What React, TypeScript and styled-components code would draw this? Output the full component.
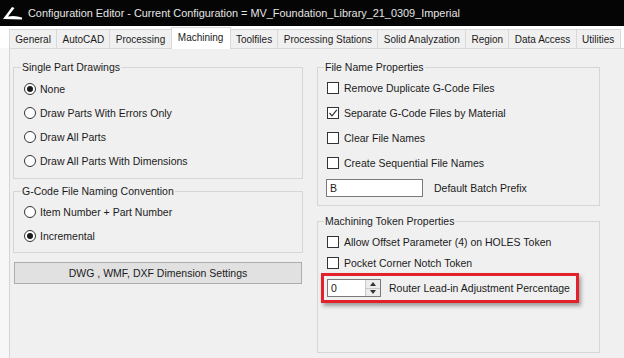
import React from 'react';
import styled, { createGlobalStyle } from 'styled-components';

const GlobalStyle = createGlobalStyle`
  html, body {
    margin: 0;
    padding: 0;
    background: #ffffff;
    font-family: "Liberation Sans", Arial, sans-serif;
    color: #1b1b1b;
  }
  * { box-sizing: border-box; }
`;

const Window = styled.div`
  width: 624px;
  height: 358px;
  display: flex;
  flex-direction: column;
  overflow: hidden;
  background: #f7f7f7;
`;

const TitleBar = styled.div`
  height: 26px;
  flex: none;
  background: #050505;
  display: flex;
  align-items: center;
  gap: 5px;
  padding-left: 3px;
  color: #e4e4e4;
  font-size: 10.9px;
  white-space: nowrap;
`;

const TabStrip = styled.div`
  height: 22px;
  flex: none;
  display: flex;
  align-items: flex-end;
  padding-left: 9px;
  background: #ffffff;
`;

const Tab = styled.div<{ $active?: boolean }>`
  height: ${p => (p.$active ? '22px' : '19px')};
  margin-bottom: ${p => (p.$active ? '-1px' : '0')};
  margin-right: -1px;
  padding: 0 ${p => (p.$active ? '6.3px' : '5.3px')};
  display: flex;
  align-items: center;
  padding-bottom: ${p => (p.$active ? '3px' : '0')};
  border: 1px solid #d9d9d9;
  border-bottom: none;
  background: ${p => (p.$active ? '#ffffff' : '#f0f0f0')};
  font-size: 10px;
  white-space: nowrap;
  position: relative;
  z-index: ${p => (p.$active ? 1 : 0)};
`;

const TabPage = styled.div`
  flex: 1;
  margin-left: 9px;
  border-left: 1px solid #d4d4d4;
  border-top: 1px solid #d9d9d9;
  background: #f0f0f0;
  display: grid;
  grid-template-columns: 290px 283px;
  column-gap: 14px;
  padding: 12px 0 0 3px;
  align-items: start;
`;

const Column = styled.div`
  display: flex;
  flex-direction: column;
`;

const Group = styled.fieldset<{ $gap?: number; $inset?: number; $top?: number }>`
  margin: 0 0 ${p => p.$gap ?? 0}px 0;
  padding: ${p => p.$top ?? 1}px 8px 5px ${p => p.$inset ?? 10}px;
  border: 1px solid #d6d6d6;
  min-inline-size: 0;
  display: flex;
  flex-direction: column;
`;

const Legend = styled.legend`
  font-size: 10.5px;
  line-height: 13px;
  padding: 0 1px;
  margin-left: -3px;
  color: #1b1b1b;
`;

const Row = styled.div<{ $h?: number }>`
  height: ${p => p.$h ?? 24}px;
  display: flex;
  align-items: center;
  font-size: 10.5px;
  white-space: nowrap;
`;

const Radio = styled.span<{ $on?: boolean }>`
  width: 12px;
  height: 12px;
  flex: none;
  border-radius: 50%;
  border: 1px solid #333333;
  background: #ffffff;
  margin-right: 4px;
  display: flex;
  align-items: center;
  justify-content: center;
  &::after {
    content: '';
    width: 6px;
    height: 6px;
    border-radius: 50%;
    background: ${p => (p.$on ? '#1a1a1a' : 'transparent')};
  }
`;

const Box = styled.span`
  width: 12px;
  height: 12px;
  flex: none;
  border: 1px solid #333333;
  background: #ffffff;
  margin-right: 5px;
  display: flex;
  align-items: center;
  justify-content: center;
`;

const Button = styled.div`
  margin-top: 9px;
  height: 22px;
  width: 288px;
  margin-left: 1px;
  background: #e1e1e1;
  border: 1px solid #adadad;
  display: flex;
  align-items: center;
  justify-content: center;
  font-size: 10.5px;
`;

const TextBox = styled.div<{ $w: number }>`
  width: ${p => p.$w}px;
  height: 18px;
  border: 1px solid #7a7a7a;
  background: #ffffff;
  padding-left: 3px;
  display: flex;
  align-items: center;
  font-size: 10.5px;
  margin-left: -1px;
`;

const FieldLabel = styled.span<{ $gap: number }>`
  margin-left: ${p => p.$gap}px;
`;

const Highlight = styled.div`
  height: 30px;
  margin-left: -6px;
  width: 258px;
  border: 3px solid #e2212a;
  box-shadow: 2px 3px 4px rgba(0, 0, 0, 0.35);
  display: flex;
  align-items: center;
  padding-left: 3px;
  font-size: 10.5px;
  white-space: nowrap;
`;

const Spinner = styled.div`
  width: 54px;
  height: 18px;
  border: 1px solid #7a7a7a;
  background: #ffffff;
  display: flex;
  font-size: 10.5px;
`;

const SpinValue = styled.div`
  flex: 1;
  padding-left: 3px;
  display: flex;
  align-items: center;
`;

const SpinArrows = styled.div`
  width: 15px;
  display: flex;
  flex-direction: column;
  border-left: 1px solid #c8c8c8;
`;

const SpinButton = styled.div<{ $up?: boolean }>`
  flex: 1;
  background: #ececec;
  border-bottom: ${p => (p.$up ? '1px solid #c8c8c8' : 'none')};
  display: flex;
  align-items: center;
  justify-content: center;
  &::after {
    content: '';
    border-left: 3px solid transparent;
    border-right: 3px solid transparent;
    ${p => (p.$up ? 'border-bottom: 4px solid #333;' : 'border-top: 4px solid #333;')}
  }
`;

const tabs = [
  'General', 'AutoCAD', 'Processing', 'Machining', 'Toolfiles',
  'Processing Stations', 'Solid Analyzation', 'Region', 'Data Access', 'Utilities'
];

function Logo () {
  return (
    <svg width="20" height="16" viewBox="0 0 20 16">
      <path d="M0 14 L9 2 L11.5 3 L5 11.5 Q12 10 19 12.5 L19 14.5 Z" fill="#ffffff" />
    </svg>
  );
}

function Check ({ on }: { on?: boolean }) {
  return (
    <Box>
      {on && (
        <svg width="10" height="10" viewBox="0 0 10 10">
          <path d="M1.5 5 L4 7.8 L8.8 1.8" stroke="#333" strokeWidth="1.2" fill="none" />
        </svg>
      )}
    </Box>
  );
}

export default function App () {
  return (
    <Window>
      <GlobalStyle />
      <TitleBar>
        <Logo />
        Configuration Editor - Current Configuration = MV_Foundation_Library_21_0309_Imperial
      </TitleBar>
      <TabStrip>
        {tabs.map(t => <Tab key={t} $active={t === 'Machining'}>{t}</Tab>)}
      </TabStrip>
      <TabPage>
        <Column>
          <Group $gap={6} $top={3}>
            <Legend>Single Part Drawings</Legend>
            <Row><Radio $on />None</Row>
            <Row><Radio />Draw Parts With Errors Only</Row>
            <Row><Radio />Draw All Parts</Row>
            <Row><Radio />Draw All Parts With Dimensions</Row>
          </Group>
          <Group $top={2} style={{ paddingBottom: 4 }}>
            <Legend>G-Code File Naming Convention</Legend>
            <Row><Radio />Item Number + Part Number</Row>
            <Row><Radio $on />Incremental</Row>
          </Group>
          <Button>DWG , WMF, DXF Dimension Settings</Button>
        </Column>
        <Column>
          <Group $gap={9} $inset={9}>
            <Legend>File Name Properties</Legend>
            <Row $h={25}><Check />Remove Duplicate G-Code Files</Row>
            <Row $h={25}><Check on />Separate G-Code Files by Material</Row>
            <Row $h={25}><Check />Clear File Names</Row>
            <Row $h={25}><Check />Create Sequential File Names</Row>
            <Row $h={25}>
              <TextBox $w={97}>B</TextBox>
              <FieldLabel $gap={11}>Default Batch Prefix</FieldLabel>
            </Row>
          </Group>
          <Group $inset={9} $top={2} style={{ height: 138 }}>
            <Legend>Machining Token Properties</Legend>
            <Row $h={23}><Check />Allow Offset Parameter (4) on HOLES Token</Row>
            <Row $h={20}><Check />Pocket Corner Notch Token</Row>
            <Highlight>
              <Spinner>
                <SpinValue>0</SpinValue>
                <SpinArrows>
                  <SpinButton $up />
                  <SpinButton />
                </SpinArrows>
              </Spinner>
              <FieldLabel $gap={8}>Router Lead-in Adjustment Percentage</FieldLabel>
            </Highlight>
          </Group>
        </Column>
      </TabPage>
    </Window>
  );
}
